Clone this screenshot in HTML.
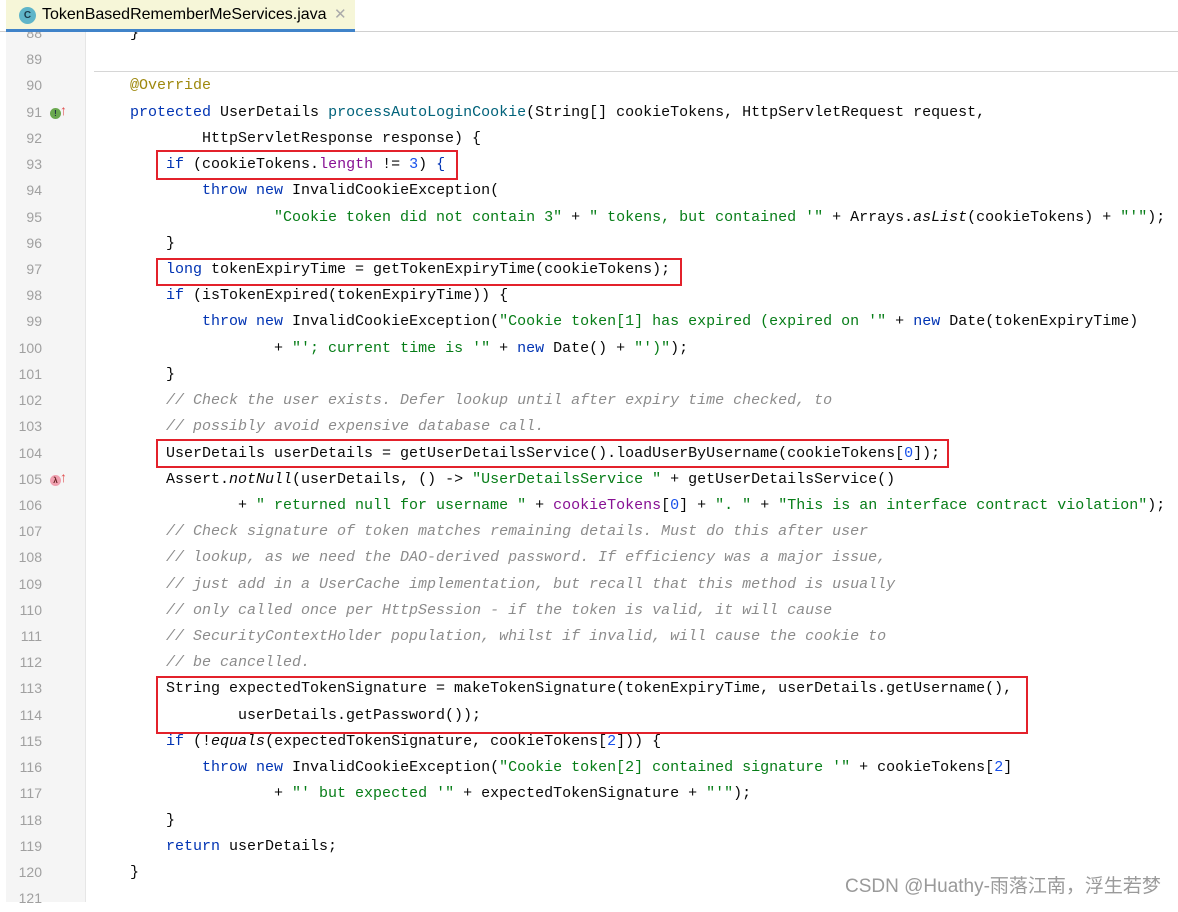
<!DOCTYPE html>
<html><head><meta charset="utf-8"><style>
*{margin:0;padding:0;box-sizing:border-box}
body{width:1178px;height:902px;overflow:hidden;background:#fff;position:relative;font-family:"Liberation Mono",monospace}
#tabbar{position:absolute;left:0;top:0;width:1178px;height:32px;background:#fff;border-bottom:1px solid #d0d0d0;z-index:5}
#tab{position:absolute;left:6px;top:0;width:349px;height:32px;background:#f6f6d8;border-bottom:3px solid #4083c9}
#tab .ic{position:absolute;left:13px;top:7px;width:17px;height:17px;border-radius:50%;background:#5fb5c9;color:#1a3a4a;font:bold 10px "Liberation Sans",sans-serif;text-align:center;line-height:17px}
#tab .t{position:absolute;left:36px;top:6px;font:16px "Liberation Sans",sans-serif;color:#000}
#tab .x{position:absolute;left:328px;top:5px;font:15px "Liberation Sans",sans-serif;color:#aaa}
#gutter{position:absolute;left:6px;top:0;width:80px;height:902px;background:#f5f5f5;border-right:1px solid #e6e6e6}
#lines{position:absolute;left:0;top:21px;width:1178px}
.l{position:relative;height:26.23px;line-height:26.23px}
.n{position:absolute;left:6px;top:4px;width:36px;text-align:right;font:14px "Liberation Sans",sans-serif;color:#a0a0a0}
.c{position:absolute;left:94px;font-size:15px;white-space:pre;color:#080808;letter-spacing:0}
.k{color:#0033b3}.s{color:#067d17}.cm{color:#8c8c8c;font-style:italic}.a{color:#9e880d}.m{color:#00627a}.f{color:#871094}.num{color:#1750eb}.i{font-style:italic}
.box{position:absolute;border:2px solid #e3212b}
.sep{position:absolute;left:94px;top:71px;width:1084px;height:1px;background:#d6d6d6}
#wm{position:absolute;left:845px;top:871px;font:19px "Liberation Sans","Noto Sans CJK SC",sans-serif;color:#9a9a9a}
.gi{position:absolute;left:50px;width:11px;height:11px;border-radius:50%;font:bold 8px "Liberation Sans",sans-serif;text-align:center;line-height:11px}
</style></head><body>
<div id="gutter"></div>
<div class="sep"></div>
<div id="lines">
<div class="l"><span class="n">88</span><span class="c">    }</span></div>
<div class="l"><span class="n">89</span><span class="c"></span></div>
<div class="l"><span class="n">90</span><span class="c">    <span class="a">@Override</span></span></div>
<div class="l"><span class="n">91</span><span class="gi" style="top:8px;background:#6aa84f;color:#234">!</span><span style="position:absolute;left:60px;top:2px;color:#e05050;font:14px sans-serif">↑</span><span class="c">    <span class="k">protected</span> UserDetails <span class="m">processAutoLoginCookie</span>(String[] cookieTokens, HttpServletRequest request,</span></div>
<div class="l"><span class="n">92</span><span class="c">            HttpServletResponse response) {</span></div>
<div class="l"><span class="n">93</span><span class="c">        <span class="k">if</span> (cookieTokens.<span class="f">length</span> != <span class="num">3</span>) <span class="k">{</span></span></div>
<div class="l"><span class="n">94</span><span class="c">            <span class="k">throw new</span> InvalidCookieException(</span></div>
<div class="l"><span class="n">95</span><span class="c">                    <span class="s">"Cookie token did not contain 3"</span> + <span class="s">" tokens, but contained '"</span> + Arrays.<span class="i">asList</span>(cookieTokens) + <span class="s">"'"</span>);</span></div>
<div class="l"><span class="n">96</span><span class="c">        }</span></div>
<div class="l"><span class="n">97</span><span class="c">        <span class="k">long</span> tokenExpiryTime = getTokenExpiryTime(cookieTokens);</span></div>
<div class="l"><span class="n">98</span><span class="c">        <span class="k">if</span> (isTokenExpired(tokenExpiryTime)) {</span></div>
<div class="l"><span class="n">99</span><span class="c">            <span class="k">throw new</span> InvalidCookieException(<span class="s">"Cookie token[1] has expired (expired on '"</span> + <span class="k">new</span> Date(tokenExpiryTime)</span></div>
<div class="l"><span class="n">100</span><span class="c">                    + <span class="s">"'; current time is '"</span> + <span class="k">new</span> Date() + <span class="s">"')"</span>);</span></div>
<div class="l"><span class="n">101</span><span class="c">        }</span></div>
<div class="l"><span class="n">102</span><span class="c">        <span class="cm">// Check the user exists. Defer lookup until after expiry time checked, to</span></span></div>
<div class="l"><span class="n">103</span><span class="c">        <span class="cm">// possibly avoid expensive database call.</span></span></div>
<div class="l"><span class="n">104</span><span class="c">        UserDetails userDetails = getUserDetailsService().loadUserByUsername(cookieTokens[<span class="num">0</span>]);</span></div>
<div class="l"><span class="n">105</span><span class="gi" style="top:8px;background:#f0a0b0;color:#622">λ</span><span style="position:absolute;left:60px;top:2px;color:#e05050;font:14px sans-serif">↑</span><span class="c">        Assert.<span class="i">notNull</span>(userDetails, () -> <span class="s">"UserDetailsService "</span> + getUserDetailsService()</span></div>
<div class="l"><span class="n">106</span><span class="c">                + <span class="s">" returned null for username "</span> + <span class="f">cookieTokens</span>[<span class="num">0</span>] + <span class="s">". "</span> + <span class="s">"This is an interface contract violation"</span>);</span></div>
<div class="l"><span class="n">107</span><span class="c">        <span class="cm">// Check signature of token matches remaining details. Must do this after user</span></span></div>
<div class="l"><span class="n">108</span><span class="c">        <span class="cm">// lookup, as we need the DAO-derived password. If efficiency was a major issue,</span></span></div>
<div class="l"><span class="n">109</span><span class="c">        <span class="cm">// just add in a UserCache implementation, but recall that this method is usually</span></span></div>
<div class="l"><span class="n">110</span><span class="c">        <span class="cm">// only called once per HttpSession - if the token is valid, it will cause</span></span></div>
<div class="l"><span class="n">111</span><span class="c">        <span class="cm">// SecurityContextHolder population, whilst if invalid, will cause the cookie to</span></span></div>
<div class="l"><span class="n">112</span><span class="c">        <span class="cm">// be cancelled.</span></span></div>
<div class="l"><span class="n">113</span><span class="c">        String expectedTokenSignature = makeTokenSignature(tokenExpiryTime, userDetails.getUsername(),</span></div>
<div class="l"><span class="n">114</span><span class="c">                userDetails.getPassword());</span></div>
<div class="l"><span class="n">115</span><span class="c">        <span class="k">if</span> (!<span class="i">equals</span>(expectedTokenSignature, cookieTokens[<span class="num">2</span>])) {</span></div>
<div class="l"><span class="n">116</span><span class="c">            <span class="k">throw new</span> InvalidCookieException(<span class="s">"Cookie token[2] contained signature '"</span> + cookieTokens[<span class="num">2</span>]</span></div>
<div class="l"><span class="n">117</span><span class="c">                    + <span class="s">"' but expected '"</span> + expectedTokenSignature + <span class="s">"'"</span>);</span></div>
<div class="l"><span class="n">118</span><span class="c">        }</span></div>
<div class="l"><span class="n">119</span><span class="c">        <span class="k">return</span> userDetails;</span></div>
<div class="l"><span class="n">120</span><span class="c">    }</span></div>
<div class="l"><span class="n">121</span><span class="c"></span></div>
</div>
<div class="box" style="left:156px;top:150px;width:302px;height:30px"></div>
<div class="box" style="left:156px;top:258px;width:526px;height:28px"></div>
<div class="box" style="left:156px;top:439px;width:793px;height:29px"></div>
<div class="box" style="left:156px;top:676px;width:872px;height:58px"></div>
<div id="wm">CSDN @Huathy-雨落江南，浮生若梦</div>
<div id="tabbar"><div id="tab"><div class="ic">C</div><div class="t">TokenBasedRememberMeServices.java</div><div class="x">✕</div></div></div>
</body></html>
